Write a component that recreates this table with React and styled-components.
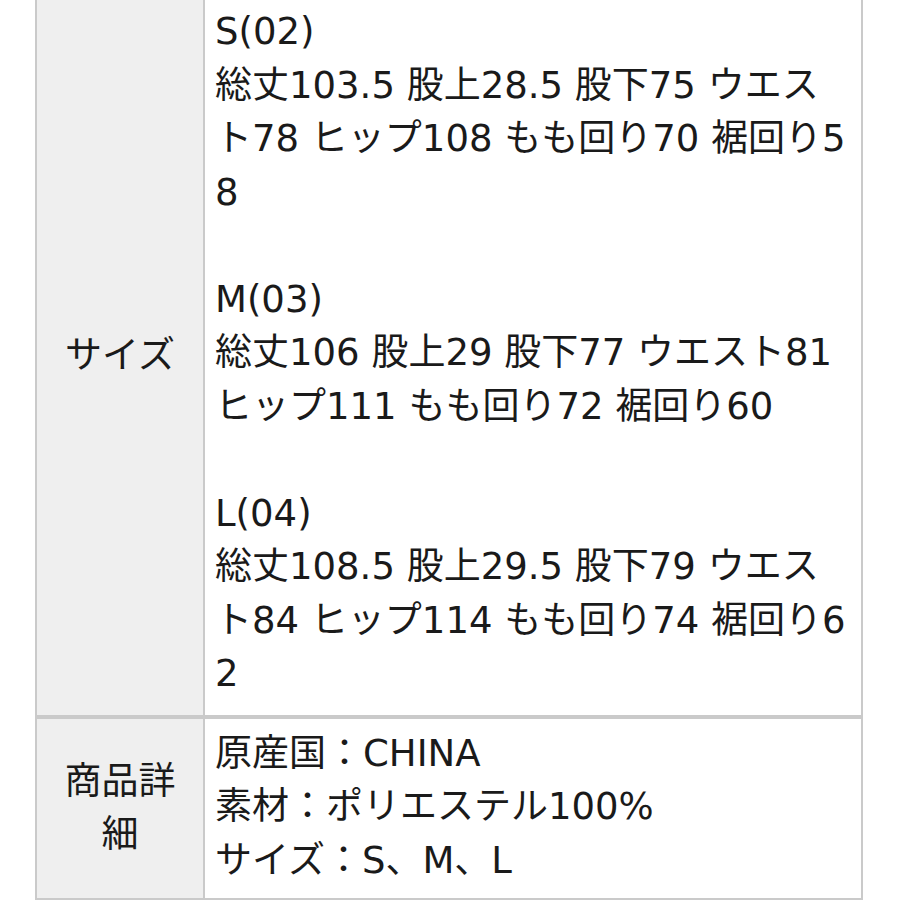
import React from 'react'
import styled, { createGlobalStyle } from 'styled-components'

const Global = createGlobalStyle`
    html, body {
        margin: 0;
        padding: 0;
        background: #ffffff;
    }
    body {
        font-family: "DejaVu Sans", "Noto Sans CJK JP", sans-serif;
        color: #1a1a1a;
    }
`

const Page = styled.div`
    padding: 0 37px 0 35px;
    overflow: hidden;
    height: 900px;
`

const Table = styled.table`
    width: 100%;
    border-collapse: collapse;
    table-layout: fixed;
    margin-top: -5px;
`

const Cell = styled.td`
    border-style: solid;
    border-color: #cacaca;
    border-width: ${p => p.$top ? '2px' : '4px'} 2px 2px 2px;
    font-size: 37px;
    line-height: 53.5px;
    word-break: break-all;
`

const Label = styled(Cell)`
    background: #efefef;
    padding: 0 12px;
    text-align: center;
    vertical-align: middle;
`

const Value = styled(Cell)`
    padding: ${p => p.$top ? '8px 14px 14px 10px' : '8px 14px 11px 10px'};
    vertical-align: top;
`

const Line = styled.div`
    min-height: 53.5px;
`

const sizes = [
    ['S(02)', '総丈103.5 股上28.5 股下75 ウエスト78 ヒップ108 もも回り70 裾回り58'],
    ['M(03)', '総丈106 股上29 股下77 ウエスト81 ヒップ111 もも回り72 裾回り60'],
    ['L(04)', '総丈108.5 股上29.5 股下79 ウエスト84 ヒップ114 もも回り74 裾回り62'],
]

const details = ['原産国：CHINA', '素材：ポリエステル100%', 'サイズ：S、M、L']

export default function App() {
    return (
        <>
            <Global />
            <Page>
                <Table>
                    <colgroup>
                        <col style={{ width: 168 }} />
                        <col />
                    </colgroup>
                    <tbody>
                        <tr>
                            <Label $top>サイズ</Label>
                            <Value $top>
                                {sizes.map(([name, text], i) => (
                                    <React.Fragment key={name}>
                                        {i > 0 && <Line />}
                                        <Line>{name}</Line>
                                        <Line>{text}</Line>
                                    </React.Fragment>
                                ))}
                            </Value>
                        </tr>
                        <tr>
                            <Label>商品詳細</Label>
                            <Value>
                                {details.map(d => <Line key={d}>{d}</Line>)}
                            </Value>
                        </tr>
                    </tbody>
                </Table>
            </Page>
        </>
    )
}
